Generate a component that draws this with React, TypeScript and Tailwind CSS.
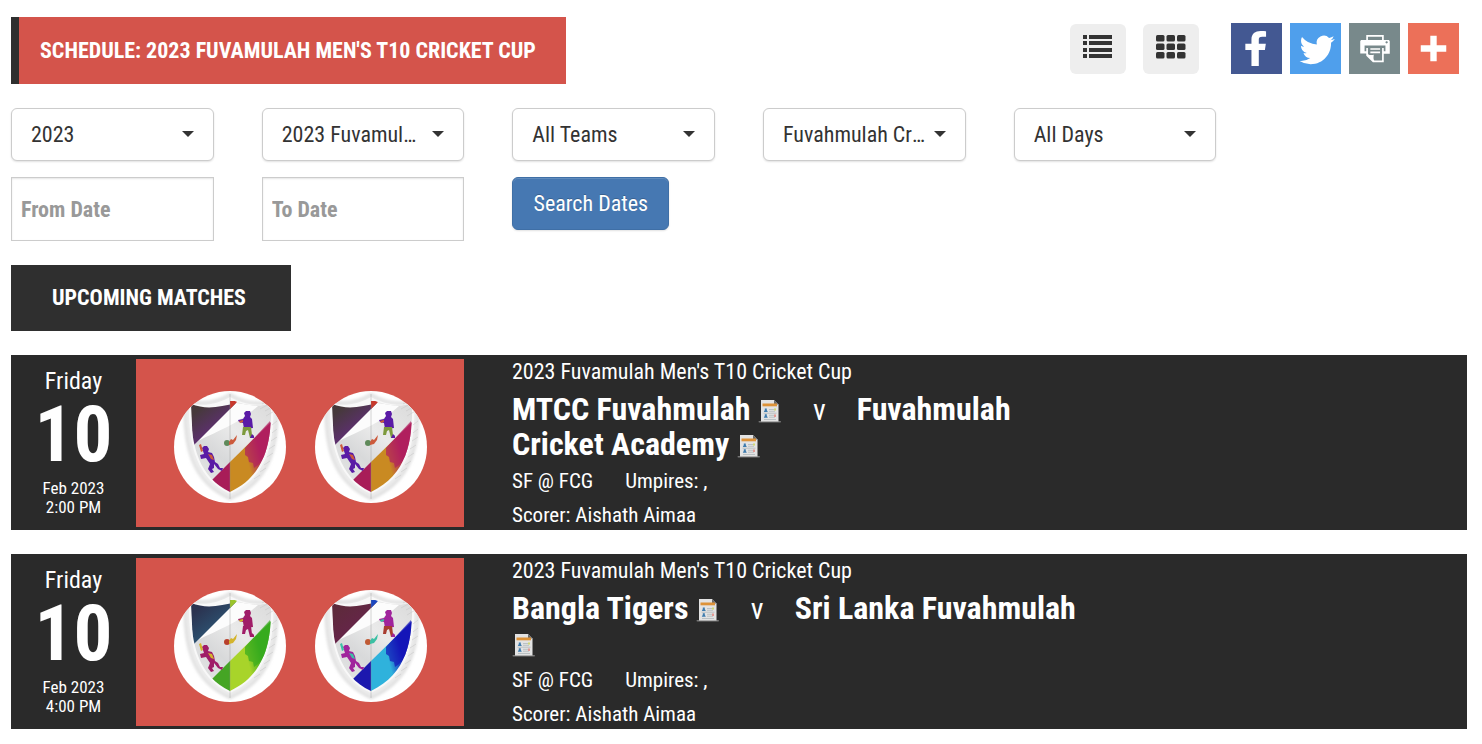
import { useId } from "react";
import type { ReactNode } from "react";

type Crest = {
  top: [string, string];
  tip: string;
  lowerLeft: string;
  lowerRight: [string, string];
  figure: string;
  legs: string;
  ball: string;
  trail: string;
};

const purpleCrest: Crest = {
  top: ["#46393b", "#6a2a8c"],
  tip: "#c8382c",
  lowerLeft: "#a81d58",
  lowerRight: ["#c98a22", "#b01f5e"],
  figure: "#5a1ba6",
  legs: "#7d9a3c",
  ball: "#5f8a5a",
  trail: "#cc5a3c",
};
const greenCrest: Crest = {
  top: ["#2b3350", "#2d5f80"],
  tip: "#9ac42a",
  lowerLeft: "#45a524",
  lowerRight: ["#a8d42a", "#37ab1e"],
  figure: "#a01d68",
  legs: "#a01d68",
  ball: "#b8402c",
  trail: "#d4b42c",
};
const blueCrest: Crest = {
  top: ["#5e2a3c", "#6a2250"],
  tip: "#1c48c0",
  lowerLeft: "#1c18ae",
  lowerRight: ["#2fb2dc", "#1416b8"],
  figure: "#a0249c",
  legs: "#a83c30",
  ball: "#c05a34",
  trail: "#3cc0a4",
};

function CrestLogo({ crest, label }: { crest: Crest; label: string }) {
  const id = useId();
  return (
    <svg viewBox="0 0 112 112" className="size-28 shrink-0" role="img" aria-label={label}>
      <defs>
        <clipPath id={`${id}c`}>
          <circle cx="56" cy="56" r="56" />
        </clipPath>
        <clipPath id={`${id}s`}>
          <path d="M17 12C30 17 44 14 56 8C68 14 84 17 97 12C98 50 92 84 56 101C24 86 16 52 17 12Z" />
        </clipPath>
        <linearGradient id={`${id}t`} x1="0" y1="0" x2="0.7" y2="0.9">
          <stop offset="0.2" stopColor={crest.top[0]} />
          <stop offset="1" stopColor={crest.top[1]} />
        </linearGradient>
        <linearGradient id={`${id}l`} x1="0" y1="0.7" x2="0.9" y2="0.3">
          <stop offset="0.45" stopColor={crest.lowerRight[0]} />
          <stop offset="0.78" stopColor={crest.lowerRight[1]} />
        </linearGradient>
        <linearGradient id={`${id}g`} x1="0" y1="1" x2="1" y2="0">
          <stop offset="0" stopColor="#ececec" />
          <stop offset="0.35" stopColor="#d8d9da" />
          <stop offset="0.55" stopColor="#eaeaea" />
          <stop offset="1" stopColor="#d4d4d4" />
        </linearGradient>
        <filter id={`${id}b`} x="-10%" y="-10%" width="120%" height="120%">
          <feGaussianBlur stdDeviation="1.6" />
        </filter>
      </defs>
      <g clipPath={`url(#${id}c)`}>
        <rect width="112" height="112" fill="#fff" />
        <path
          d="M11 9C28 14 43 11 56 3C69 11 86 14 103 9C105 54 98 90 56 108C17 91 9 54 11 9Z"
          fill="#ececec"
          stroke="#d8d8d8"
          strokeWidth="2"
          filter={`url(#${id}b)`}
        />
        <path
          d="M15 12C30 16 44 13 56 6C68 13 84 16 99 12C101 50 94 86 56 103C22 88 14 52 15 12Z"
          fill="#f8f8f8"
        />
        <g clipPath={`url(#${id}s)`}>
          <path d="M0 74L62 12L112 0V20L38 92L20 80Z" fill={`url(#${id}g)`} />
          <path d="M20 54L62 12L84 15C66 32 44 40 24 50Z" fill="#fcfcfc" />
          <path d="M17 13C32 19 46 16 62 12L19 55Z" fill={`url(#${id}t)`} />
          <path d="M56 10H64L56 18Z" fill={crest.tip} />
          <path d="M98 30L56 71V103C84 94 98 66 98 30Z" fill={`url(#${id}l)`} />
          <path d="M56 71L36 91L56 103Z" fill={crest.lowerLeft} />
          <path
            d="M71 57l0 7 3 2 1 5 4 1 1 5 4-3 12-16V30Z"
            fill={crest.lowerRight[1]}
            opacity="0.7"
          />
        </g>
        <path d="M56 3V108" stroke="#8c8c8c" strokeWidth="1" opacity="0.35" />
        <path
          d="M88 13l12-7M86 18l15-8M91 20l11-6M92 25l10-6M98 34l5-4M98 42l5-4M97 50l6-4M95 58l6-4M93 66l6-4M90 74l6-4M86 81l6-4M80 88l6-4"
          stroke="#c8c8c8"
          strokeWidth="0.8"
          opacity="0.7"
        />
        <g fill={crest.figure}>
          <path d="M70 22l2-2h4l1 3-1 3 2 2 1 9-9 1-1-6-4-1-1-2 5-1 2-3z" />
          <path d="M28 57l2-2h3l2 3-1 3 4 1 2 4 1 5 3 2 2 4 3 0-1 3-4-2-4-5 0 4-2 1 2 3-3 1-3-4 2-5-4-6-5 1-1-4 4-1z" />
        </g>
        <path d="M69 36h8l1 8 2 1v2h-4l-2-8-2 1-1 4h-3z" fill={crest.legs} />
        <path d="M78 43l2 2v2h-4z" fill={crest.figure} />
        <path d="M25 54l2-1 2 7-2 1zM65 30l4-1v2l-3 1z" fill={crest.trail} />
        <path d="M34 63l4 1 2 5-3-1z" fill={crest.trail} />
        <circle cx="53" cy="52" r="3" fill={crest.ball} />
        <path d="M55 51l2-3 2 1 4-5-1 5-3 4-4 1z" fill={crest.trail} />
      </g>
    </svg>
  );
}

function SheetIcon() {
  return (
    <svg viewBox="0 0 24 24" className="inline-block size-6 align-[-3px]" role="img" aria-label="Team sheet">
      <rect x="0.500" y="22" width="22.500" height="1.400" rx="0.700" fill="#777" />
      <path d="M3 1H16L20.500 5.500V22.500H3Z" fill="#e3e3e3" />
      <path d="M16 1L20.500 5.500H16Z" fill="#6b6b6b" />
      <rect x="4.500" y="4.500" width="14.500" height="2.800" fill="#dd9238" />
      <path d="M6.800 9.500h2v1.500l1 2h-4l1-2zM6.800 15.200h2v1.500l1 2h-4l1-2z" fill="#3f7cae" />
      <path d="M11 10.500h6M11 12.300h6M11 16.300h6M11 18.200h6M5.500 14.200h13M6 20.500h12" stroke="#a9b1b6" strokeWidth="0.7" />
      <rect x="16" y="9.500" width="2" height="2" fill="#cfd873" />
      <rect x="16" y="15.500" width="2" height="2.500" fill="#e39a94" />
    </svg>
  );
}

function Dropdown({ label, options }: { label: string; options: string[] }) {
  return (
    <label className="relative block">
      <span className="sr-only">{label}</span>
      <select className="block h-[53px] w-full appearance-none overflow-hidden rounded-md border border-[#ccc] bg-white pr-[39px] pl-[19px] text-[22px] text-ellipsis whitespace-nowrap text-[#333] shadow-[0_1px_2px_rgba(0,0,0,0.12)]">
        {options.map((o) => (
          <option key={o}>{o}</option>
        ))}
      </select>
      <svg viewBox="0 0 12 6" className="pointer-events-none absolute top-[23px] right-5 h-1.5 w-3" aria-hidden="true">
        <path d="M0 0H12L6 6Z" fill="#333" />
      </svg>
    </label>
  );
}

function DateField({ label }: { label: string }) {
  return (
    <input
      type="text"
      aria-label={label}
      placeholder={label}
      className="h-16 w-full border border-[#ccc] bg-white px-[9px] text-[22px] font-bold text-[#333] shadow-[inset_0_1px_2px_rgba(0,0,0,0.1)] placeholder:text-[#999]"
    />
  );
}

function ShareLink({ label, color, path }: { label: string; color: string; path: string }) {
  return (
    <a href="#share" aria-label={label} className={`block size-[51px] ${color}`}>
      <svg viewBox="0 0 32 32" className="size-full" fill="#fff" aria-hidden="true">
        <path d={path} />
      </svg>
    </a>
  );
}

const shares = [
  {
    label: "Facebook",
    color: "bg-[#435892]",
    path: "M22 5.16c-.406-.054-1.806-.16-3.43-.16-3.4 0-5.733 1.825-5.733 5.17v2.882H9v3.913h3.837V27h4.604V16.965h3.823l.587-3.913h-4.41v-2.500c0-1.123.347-1.903 2.198-1.903H22V5.160z",
  },
  {
    label: "Twitter",
    color: "bg-[#4f9fec]",
    path: "M27.996 10.116c-.81.36-1.680.602-2.592.71a4.526 4.526 0 0 0 1.984-2.496 9.037 9.037 0 0 1-2.866 1.095 4.513 4.513 0 0 0-7.690 4.116 12.810 12.810 0 0 1-9.300-4.715 4.490 4.490 0 0 0-.612 2.270 4.510 4.510 0 0 0 2.008 3.755 4.495 4.495 0 0 1-2.044-.564v.057a4.515 4.515 0 0 0 3.620 4.425 4.520 4.520 0 0 1-2.040.077 4.517 4.517 0 0 0 4.217 3.134 9.055 9.055 0 0 1-5.604 1.930A9.180 9.180 0 0 1 6 23.850a12.773 12.773 0 0 0 6.918 2.027c8.300 0 12.840-6.876 12.840-12.840 0-.195-.005-.39-.014-.583a9.172 9.172 0 0 0 2.252-2.336",
  },
  {
    label: "Print",
    color: "bg-[#78898b]",
    path: "M24.67 10.62h-2.86V7.49H10.82v3.12H7.95c-.5 0-.9.4-.9.9v7.66h3.77v1.31L15 24.66h6.81v-5.44h3.77v-7.7c-.01-.5-.41-.9-.91-.9zM11.88 8.56h8.86v2.06h-8.86V8.56zm10.98 9.18h-1.05v-2.1h-1.06v7.96H16.4c-1.58 0-.82-3.74-.82-3.74s-3.65.89-3.69-.78v-3.43h-1.06v2.06H9.77v-3.58h13.09v3.61zm.75-4.91c-.4 0-.72-.32-.72-.72 0-.4.32-.72.72-.72.4 0 .72.32.72.72 0 .4-.32.72-.72.72zm-4.12 2.96h-6.1v1.06h6.1v-1.06zm-6.11 3.15h6.1v-1.06h-6.1v1.06z",
  },
  { label: "More", color: "bg-[#ec7059]", path: "M18 14V8h-4v6H8v4h6v6h4v-6h6v-4h-6z" },
];

function ViewButton({ label, children }: { label: string; children: ReactNode }) {
  return (
    <button type="button" aria-label={label} className="flex h-[50px] w-14 items-center justify-center rounded-md bg-[#eee] pb-1">
      <svg viewBox="0 0 30 24" className="h-6 w-[30px]" fill="#333" aria-hidden="true">
        {children}
      </svg>
    </button>
  );
}

type Match = {
  time: string;
  home: string;
  away: string;
  homeCrest: Crest;
  awayCrest: Crest;
};

const matches: Match[] = [
  { time: "2:00 PM", home: "MTCC Fuvahmulah", away: "Fuvahmulah Cricket Academy", homeCrest: purpleCrest, awayCrest: purpleCrest },
  { time: "4:00 PM", home: "Bangla Tigers", away: "Sri Lanka Fuvahmulah", homeCrest: greenCrest, awayCrest: blueCrest },
];

function MatchCard({ match }: { match: Match }) {
  return (
    <article className="flex bg-[#2a2a2a] text-white">
      <div className="w-[125px] shrink-0 pt-3 text-center">
        <div className="text-[24px] leading-7">Friday</div>
        <div className="text-[77px] leading-20 font-bold">10</div>
        <div className="pt-1 text-[17px] leading-[19px]">
          Feb 2023
          <br />
          {match.time}
        </div>
      </div>
      <div className="mt-1 flex h-[168px] w-[328px] shrink-0 items-center justify-center gap-[29px] bg-[#d4544b] pt-2">
        <CrestLogo crest={match.homeCrest} label={match.home} />
        <CrestLogo crest={match.awayCrest} label={match.away} />
      </div>
      <div className="ml-12 max-w-[580px]">
        <div className="text-[22px] leading-[33px]">2023 Fuvamulah Men's T10 Cricket Cup</div>
        <h3 className="pt-1 text-[32px] leading-[35px] font-bold">
          <a href="#home">{match.home}</a> <SheetIcon />
          <span className="mx-[31px] text-[30px] leading-none font-normal">v</span>
          <a href="#away">{match.away}</a> <SheetIcon />
        </h3>
        <div className="flex gap-8 pt-0.5 text-[21px] leading-[34px]">
          <span>SF @ FCG</span>
          <span>Umpires: ,</span>
        </div>
        <div className="pt-0.5 text-[21px] leading-[30px]">Scorer: Aishath Aimaa</div>
      </div>
    </article>
  );
}

export default function App() {
  return (
    <main className="min-h-screen bg-white pt-[17px] pr-[15px] pb-3.5 pl-[11px] font-['Roboto_Condensed','Liberation_Sans_Narrow',Roboto,sans-serif]">
      <header className="flex items-start justify-between">
        <h1 className="min-w-[555px] border-l-8 border-[#2f2f2f] bg-[#d4544b] px-[21px] text-[22px] leading-[67px] font-bold text-white">
          SCHEDULE: 2023 FUVAMULAH MEN'S T10 CRICKET CUP
        </h1>
        <div className="flex items-end gap-8 pt-1.5 pr-2">
          <div className="flex gap-[17px]">
            <ViewButton label="List view">
              <path d="M0 0h4v4H0zM6 0h23v4H6zM0 6h4v4H0zM6 6h23v4H6zM0 13h4v4H0zM6 13h23v4H6zM0 19h4v4H0zM6 19h23v4H6z" />
            </ViewButton>
            <ViewButton label="Grid view">
              {[0, 8.5, 17].map((y) =>
                [0, 10.500, 21].map((x) => (
                  <rect key={`${x}-${y}`} x={x} y={y} width="8.500" height="6.500" rx="1.500" />
                )),
              )}
            </ViewButton>
          </div>
          <div className="flex gap-2">
            {shares.map((s) => (
              <ShareLink key={s.label} {...s} />
            ))}
          </div>
        </div>
      </header>

      <form className="mt-6 grid grid-cols-6 items-start gap-x-12 gap-y-4">
        <Dropdown label="Year" options={["2023", "2022"]} />
        <Dropdown label="Series" options={["2023 Fuvamulah Men's T10 Cricket Cup"]} />
        <Dropdown label="Team" options={["All Teams"]} />
        <Dropdown label="Ground" options={["Fuvahmulah Cricket Ground"]} />
        <Dropdown label="Day" options={["All Days"]} />
        <div className="col-start-1">
          <DateField label="From Date" />
        </div>
        <DateField label="To Date" />
        <button
          type="button"
          className="h-[53px] min-w-[157px] justify-self-start rounded-md border border-[#3f6fa6] bg-[#4678b2] px-[19px] text-[22px] whitespace-nowrap text-white shadow-[inset_0_1px_0_rgba(255,255,255,0.15),0_1px_2px_rgba(0,0,0,0.12)] text-shadow-[0_-1px_0_rgba(0,0,0,0.2)]"
        >
          Search Dates
        </button>
      </form>

      <h2 className="mt-6 w-fit min-w-[280px] bg-[#2f2f2f] px-[41px] text-[22px] leading-[66px] font-bold text-white">
        UPCOMING MATCHES
      </h2>

      <section className="mt-6 flex flex-col gap-6">
        {matches.map((m) => (
          <MatchCard key={m.time} match={m} />
        ))}
      </section>
    </main>
  );
}
